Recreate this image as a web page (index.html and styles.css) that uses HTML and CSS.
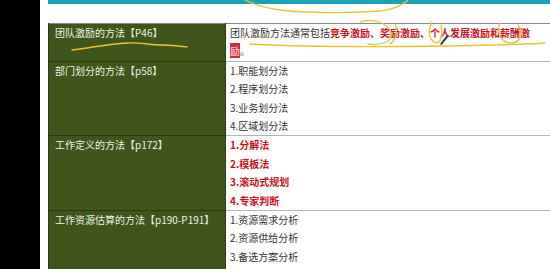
FILE: index.html
```html
<!DOCTYPE html>
<html lang="zh-CN">
<head>
<meta charset="utf-8">
<title>方法汇总</title>
<link rel="stylesheet" href="styles.css">
</head>
<body>
<div class="screen">
  <div class="side"></div>
  <div class="main">
    <div class="topbar"></div>
    <table class="grid">
      <colgroup><col class="c1"><col class="c2"></colgroup>
      <tr>
        <td class="k">团队激励的方法【P46】</td>
        <td class="v">团队激励方法通常包括<b class="red">竞争激励、奖励激励、个人发展激励和薪酬激</b><b class="hl">励</b>。</td>
      </tr>
      <tr>
        <td class="k">部门划分的方法【p58】</td>
        <td class="v">1.职能划分法<br>2.程序划分法<br>3.业务划分法<br>4.区域划分法</td>
      </tr>
      <tr>
        <td class="k">工作定义的方法【p172】</td>
        <td class="v red bold">1.分解法<br>2.模板法<br>3.滚动式规划<br>4.专家判断</td>
      </tr>
      <tr>
        <td class="k">工作资源估算的方法【p190-P191】</td>
        <td class="v">1.资源需求分析<br>2.资源供给分析<br>3.备选方案分析<br>&nbsp;</td>
      </tr>
    </table>
  </div>
  <svg class="ink" width="550" height="269" viewBox="0 0 550 269">
    <g fill="none" stroke="#e9c230" stroke-width="1.3" stroke-linecap="round">
      <path d="M72 50 C95 47 110 44 127 43 C140 42 150 45 160 45 C172 45 180 46 187 47"/>
      <path d="M245 0 C255 5 265 8 280 10 C310 13 350 13 380 11 C395 9 403 5 408 0"/>
      <path d="M250 44 C300 47 380 47 450 46 C500 45 530 44 545 43"/>
      <path d="M360 22 C372 18 386 22 391 32 C394 42 380 46 368 44"/>
      <path d="M390 44 C396 40 398 32 395 24"/>
      <path d="M432 22 C428 30 428 40 436 43 C441 43 443 36 441 25"/>
      <path d="M500 23 C496 32 500 43 512 43 C522 42 523 32 518 25"/>
    </g>
    <path d="M440 44 L447 35 L448.5 36.5 L441.5 45 Z" fill="#333"/>
  </svg>
</div>
</body>
</html>
```

FILE: styles.css
```css
html, body {
  margin: 0;
  padding: 0;
  background: #ffffff;
  overflow: hidden;
}

.screen {
  position: relative;
  display: flex;
  width: 550px;
  height: 269px;
  overflow: hidden;
  font-family: "Noto Sans CJK SC", "Noto Sans", sans-serif;
  font-size: 10px;
}

.side {
  flex: 0 0 40px;
  background: #000000;
}

.main {
  flex: 1 1 auto;
  padding-left: 8px;
  display: flex;
  flex-direction: column;
  gap: 19px;
  min-width: 0;
}

.topbar {
  height: 4px;
  background: #1aa3b6;
  width: 520px;
  flex: 0 0 auto;
}

.grid {
  table-layout: fixed;
  width: 510px;
  flex: 0 0 auto;
  border-collapse: collapse;
  border-top: 1px solid #8a8a8a;
  line-height: 18.4px;
}

.c1 { width: 177px; }
.c2 { width: 333px; }

.grid td {
  vertical-align: top;
  padding: 0;
}

.k {
  background: #3f5519;
  color: #eef2e2;
  padding-left: 6px !important;
  border-left: 1px solid #2c3a10;
  border-right: 1px solid #2c3a10;
  border-bottom: 1px solid #2a3810;
  white-space: nowrap;
}

.v {
  color: #333333;
  padding: 0 22px 0 4px !important;
  border-bottom: 1px solid #b5b5b5;
}

.red {
  color: #c8141f;
}

.bold, b {
  font-weight: 700;
}

.hl {
  background: #d32a3c;
  color: #f3b8c0;
}

.ink {
  position: absolute;
  left: 0;
  top: 0;
  pointer-events: none;
}
```
